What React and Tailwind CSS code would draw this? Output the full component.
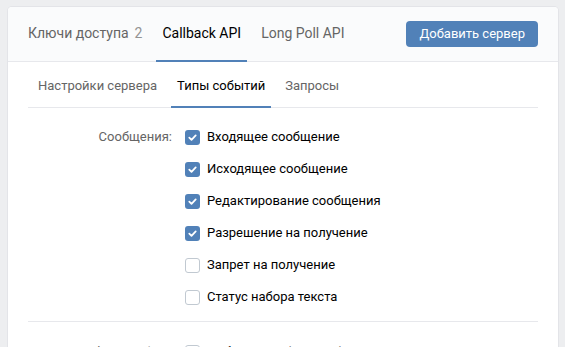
import React from 'react';
import clsx from 'clsx';

const font = { fontFamily: 'Roboto, "Liberation Sans", sans-serif' };

const sections = [
  {
    title: 'Сообщения:',
    items: [
      { label: 'Входящее сообщение', on: true },
      { label: 'Исходящее сообщение', on: true },
      { label: 'Редактирование сообщения', on: true },
      { label: 'Разрешение на получение', on: true },
      { label: 'Запрет на получение', on: false },
      { label: 'Статус набора текста', on: false },
    ],
  },
  {
    title: 'Фотографии:',
    items: [
      { label: 'Добавление фотографии', on: false },
      { label: 'Новый комментарий', on: false },
    ],
  },
];

function Checkbox({ on }) {
  return (
    <div
      className={clsx(
        'w-[15px] h-[15px] rounded-[3px] flex items-center justify-center shrink-0',
        on ? 'bg-[#5181b8]' : 'bg-white border border-[#c1c9d1]'
      )}
    >
      {on && (
        <svg width="11" height="11" viewBox="0 0 11 11">
          <path d="M2.3 5.6l2.2 2.2 4.2-4.4" fill="none" stroke="#fff" strokeWidth="1.8" strokeLinecap="round" strokeLinejoin="round" />
        </svg>
      )}
    </div>
  );
}

export default function App() {
  return (
    <div className="w-[565px] h-[347px] overflow-hidden bg-[#edeef0] pt-[7px] pl-[8px]" style={font}>
      <div className="w-[550px] bg-white rounded-t-[4px] shadow-[0_0_0_1px_#e3e4e8]">
        {/* top tabs */}
        <div className="h-[55px] flex items-stretch bg-[#fafbfc] border-b border-[#e7e8ec] pl-[14px] pr-[20px] rounded-t-[4px]">
          <div className="flex items-center px-[6px] mr-[8px] border-b-2 border-transparent -mb-px text-[14px] text-[#656565]">
            Ключи доступа<span className="ml-[6px] text-[#939393]">2</span>
          </div>
          <div className="flex items-center px-[6px] mr-[8px] border-b-2 border-[#5181b8] -mb-px text-[14px] text-black">
            Callback API
          </div>
          <div className="flex items-center px-[6px] border-b-2 border-transparent -mb-px text-[14px] text-[#656565]">
            Long Poll API
          </div>
          <button className="ml-auto self-center h-[26px] px-[13px] rounded-[4px] bg-[#5181b8] text-white text-[13px]">
            Добавить сервер
          </button>
        </div>

        {/* sub tabs */}
        <div className="mx-[20px] h-[46px] flex items-stretch border-b border-[#e7e8ec] pl-[4px]">
          <div className="flex items-center pt-[3px] px-[6px] mr-[8px] border-b-2 border-transparent -mb-px text-[13px] text-[#656565]">
            Настройки сервера
          </div>
          <div className="flex items-center pt-[3px] px-[6px] mr-[8px] border-b-2 border-[#5181b8] -mb-px text-[13px] text-black">
            Типы событий
          </div>
          <div className="flex items-center pt-[3px] px-[6px] border-b-2 border-transparent -mb-px text-[13px] text-[#656565]">
            Запросы
          </div>
        </div>

        {/* event types */}
        <div className="mx-[20px]">
          {sections.map((s, i) => (
            <div
              key={s.title}
              className={clsx('flex', i === 0 ? 'pt-[13px] pb-[8px]' : 'pt-[14px] border-t border-[#e7e8ec]')}
            >
              <div className="w-[144px] h-[32px] flex items-center justify-end text-[13px] text-[#656565]">
                {s.title}
              </div>
              <div className="ml-[13px] flex flex-col">
                {s.items.map((it) => (
                  <div key={it.label} className="h-[32px] flex items-center gap-[7px] text-[13px] text-black">
                    <Checkbox on={it.on} />
                    {it.label}
                  </div>
                ))}
              </div>
            </div>
          ))}
        </div>
      </div>
    </div>
  );
}
